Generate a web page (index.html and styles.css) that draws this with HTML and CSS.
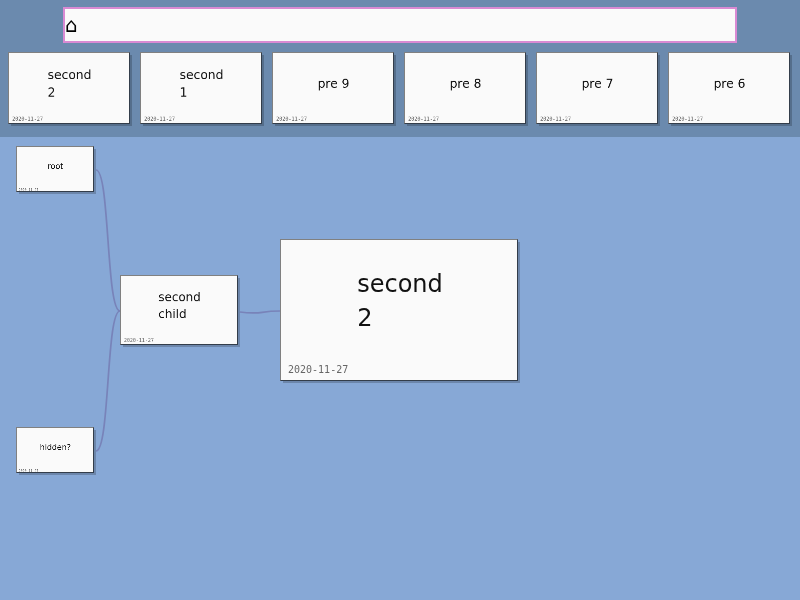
FILE: index.html
```html
<!DOCTYPE html>
<html lang="en">
<head>
<meta charset="utf-8">
<title>Cards</title>
<link rel="stylesheet" href="styles.css">
</head>
<body>
<header class="top">
  <div class="search"><span class="home">⌂</span></div>
  <div class="recent">
    <article class="card"><div class="face"><p class="title">second<br>2</p><time class="date">2020-11-27</time></div></article>
    <article class="card"><div class="face"><p class="title">second<br>1</p><time class="date">2020-11-27</time></div></article>
    <article class="card"><div class="face"><p class="title">pre 9</p><time class="date">2020-11-27</time></div></article>
    <article class="card"><div class="face"><p class="title">pre 8</p><time class="date">2020-11-27</time></div></article>
    <article class="card"><div class="face"><p class="title">pre 7</p><time class="date">2020-11-27</time></div></article>
    <article class="card"><div class="face"><p class="title">pre 6</p><time class="date">2020-11-27</time></div></article>
  </div>
</header>
<main class="canvas">
  <svg class="links" width="800" height="463" viewBox="0 137 800 463">
    <path d="M96 170C110 170 106 311 120 311"/>
    <path d="M96 451C110 451 106 311 120 311"/>
    <path d="M240 312C262 315 258 311 280 311"/>
  </svg>
  <article class="card small node-root"><div class="face"><p class="title">root</p><time class="date">2020-11-27</time></div></article>
  <article class="card small node-hidden"><div class="face"><p class="title">hidden?</p><time class="date">2020-11-27</time></div></article>
  <article class="card medium node-child"><div class="face"><p class="title">second<br>child</p><time class="date">2020-11-27</time></div></article>
  <article class="card large node-current"><div class="face"><p class="title">second<br>2</p><time class="date">2020-11-27</time></div></article>
</main>
</body>
</html>
```

FILE: styles.css
```css
* { box-sizing: border-box; }
body {
  margin: 0;
  height: 600px;
  overflow: hidden;
  display: flex;
  flex-direction: column;
  background: #87a8d6;
  font-family: "DejaVu Sans", sans-serif;
  color: #111;
}
.top {
  height: 137px;
  padding: 7px 8px 0;
  background: #6b8aae;
}
.search {
  display: flex;
  align-items: center;
  width: 674px;
  height: 36px;
  margin: 0 auto 9px;
  border: 2px solid #d98ad3;
  background: #fafafa;
}
.home {
  font-size: 20px;
  line-height: 32px;
  color: #000;
  will-change: transform;
}
.recent {
  display: flex;
  gap: 10px;
}
.card {
  --scale: 0.5126;
  flex: none;
  width: 122px;
  height: 72px;
  border: 1px solid;
  border-color: #808080 #333d4a #333d4a #808080;
  background: #fafafa;
  box-shadow: 2.5px 2.5px 0 -0.5px rgba(0, 0, 0, 0.2);
}
/* Full-size card face, scaled down to fit its frame */
.face {
  display: flex;
  flex-direction: column;
  align-items: center;
  width: 238px;
  height: 142px;
  margin: -1px 0 0 -1px;
  padding-left: 2px;
  transform: scale(var(--scale));
  transform-origin: 0 0;
  will-change: transform;
}
.title {
  flex: 1;
  display: flex;
  align-items: center;
  margin: 0;
  font-size: 24px;
  line-height: 34px;
}
.date {
  align-self: flex-start;
  margin: 0 0 5px 6px;
  font: 10px/13px "DejaVu Sans Mono", monospace;
  color: #666;
}
.canvas {
  position: relative;
  flex: 1;
}
.canvas .card { position: absolute; }
.small {
  --scale: 0.328;
  width: 78px;
  height: 46px;
}
.small .date { margin: 3px 0 2px 6px; }
.medium {
  --scale: 0.496;
  width: 118px;
  height: 70px;
}
.medium .date { margin: 1px 0 4px 6px; }
.large {
  --scale: 1;
  width: 238px;
  height: 142px;
}
.node-root { left: 16px; top: 9px; }
.node-hidden { left: 16px; top: 290px; }
.node-child { left: 120px; top: 138px; }
.node-current { left: 280px; top: 102px; }
.links {
  position: absolute;
  inset: 0;
  fill: none;
  stroke: #7883b9;
  stroke-width: 1.7;
}
```
